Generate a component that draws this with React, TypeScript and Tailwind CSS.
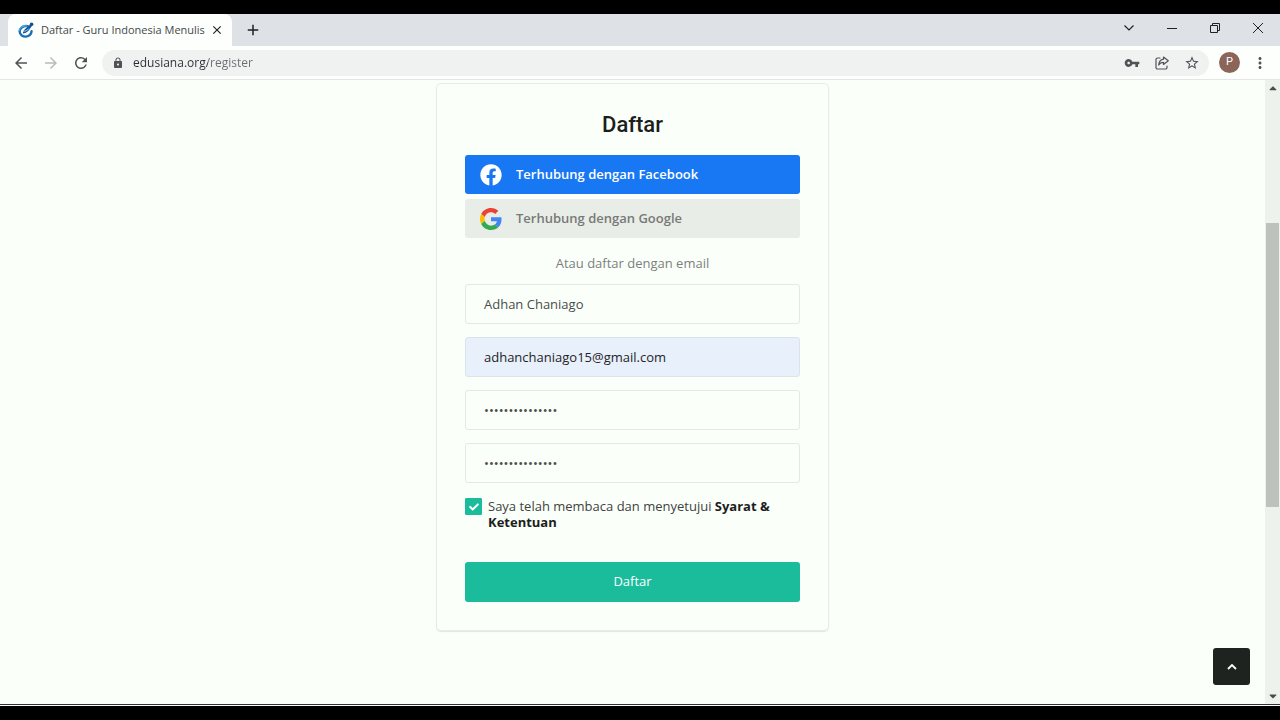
import { useState } from 'react';
import {
  MdArrowBack,
  MdArrowForward,
  MdRefresh,
  MdLock,
  MdVpnKey,
  MdStarBorder,
  MdMoreVert,
  MdClose,
  MdAdd,
} from 'react-icons/md';
import { FaFacebook, FaCheck, FaCaretUp, FaCaretDown } from 'react-icons/fa';

// Logo de la pestaña
function SiteLogo() {
  return (
    <svg viewBox="0 0 16 16" className="size-4 shrink-0" aria-hidden="true">
      <path d="M9.800 4.200C5 3.200 1.600 6.300 1.700 9.800c.2 3.300 3.200 5 6.300 4.800 3.400-.3 5.300-2.500 5.600-5.400" fill="none" stroke="#1c6fb5" strokeWidth="2.400" strokeLinecap="round" />
      <path d="M1.200 8.400C2 5.400 5 3.400 8.600 4" fill="none" stroke="#55b4e0" strokeWidth="1.200" strokeLinecap="round" />
      <path d="M5 11.500c-.2-3 2.500-4.600 4.600-6.800l3.800-3.200 1.400 1.300-3 4.200C10 9.500 8.500 11 5 11.500z" fill="#17569c" />
      <path d="M5 9.200c2.200.2 4.500-.8 5.800-2.600" fill="none" stroke="#8fd0ee" strokeWidth="1" />
      <circle cx="13.600" cy="2.300" r="1.800" fill="#1b4f86" />
    </svg>
  );
}

function ShareIcon() {
  return (
    <svg viewBox="0 0 16 16" className="size-4" fill="none" stroke="currentColor" strokeWidth="1.200" strokeLinejoin="round" aria-hidden="true">
      <path d="M6 3H3.500a1.500 1.500 0 0 0-1.500 1.500v8A1.500 1.500 0 0 0 3.500 14h8a1.500 1.500 0 0 0 1.500-1.500V11" strokeLinecap="round" />
      <path d="M9.500 2 14.300 5.700 9.500 9.400V7.300C7.300 7.300 5.800 8.100 4.700 10c.2-3.200 1.900-5.300 4.800-5.800z" />
    </svg>
  );
}

function GoogleIcon() {
  return (
    <svg viewBox="0 0 48 48" className="size-6 p-px" aria-hidden="true">
      <path fill="#EA4335" d="M24 9.500c3.540 0 6.710 1.220 9.210 3.600l6.850-6.850C35.900 2.380 30.470 0 24 0 14.620 0 6.510 5.380 2.560 13.220l7.980 6.190C12.430 13.720 17.740 9.500 24 9.500z" />
      <path fill="#4285F4" d="M46.980 24.550c0-1.570-.15-3.090-.38-4.550H24v9.020h12.940c-.58 2.960-2.260 5.480-4.780 7.180l7.730 6c4.510-4.180 7.090-10.360 7.090-17.650z" />
      <path fill="#FBBC05" d="M10.530 28.590c-.48-1.450-.76-2.990-.76-4.590s.27-3.140.76-4.590l-7.980-6.190C.92 16.460 0 20.120 0 24c0 3.880.92 7.540 2.560 10.780l7.970-6.190z" />
      <path fill="#34A853" d="M24 48c6.480 0 11.930-2.130 15.890-5.810l-7.730-6c-2.150 1.450-4.920 2.300-8.160 2.300-6.260 0-11.570-4.220-13.470-9.910l-7.980 6.190C6.510 42.620 14.620 48 24 48z" />
    </svg>
  );
}

function TabStrip() {
  return (
    <div className="flex h-8 bg-[#dee1e6] pl-2 text-[#1f2124]">
      <div className="flex w-56 items-center rounded-t-lg bg-[#fcfffc] pl-2.5 pr-2">
        <SiteLogo />
        <span className="ml-[7px] flex-1 whitespace-nowrap text-[11px] text-[#45484b]">Daftar - Guru Indonesia Menulis</span>
        <button aria-label="Tutup tab"><MdClose className="size-3.5" /></button>
      </div>
      <button aria-label="Tab baru" className="ml-3"><MdAdd className="size-[18px]" /></button>
      <div className="ml-auto flex items-center gap-[27px] pb-1 pr-3.5">
        <button aria-label="Cari tab">
          <svg viewBox="0 0 16 16" className="size-4" fill="none" stroke="currentColor" strokeWidth="1.200"><path d="m3.500 5.500 4.500 4.500 4.500-4.500" /></svg>
        </button>
        <button aria-label="Kecilkan">
          <svg viewBox="0 0 16 16" className="size-4" stroke="currentColor"><path d="M3 8.500h10" /></svg>
        </button>
        <button aria-label="Pulihkan">
          <svg viewBox="0 0 16 16" className="size-4" fill="none" stroke="currentColor"><path d="M3.500 5.500h7v7h-7zM5.500 5.500v-2h7v7h-2" /></svg>
        </button>
        <button aria-label="Tutup">
          <svg viewBox="0 0 16 16" className="size-4" stroke="currentColor"><path d="m3 3 10 10M13 3 3 13" /></svg>
        </button>
      </div>
    </div>
  );
}

function Toolbar() {
  return (
    <div className="flex h-[34px] items-center border-b border-[#e3e6e4] bg-[#fcfffc] pl-3 pr-[11px] text-[#505356]">
      <div className="flex gap-3">
        <button aria-label="Kembali"><MdArrowBack className="size-[18px]" /></button>
        <button aria-label="Maju" className="text-[#b9bcbc]"><MdArrowForward className="size-[18px]" /></button>
        <button aria-label="Muat ulang"><MdRefresh className="size-[18px]" /></button>
      </div>
      <div className="ml-3 flex h-[26px] flex-1 items-center rounded-full bg-[#eff2f1] pl-2.5 pr-[9px]">
        <MdLock className="size-3" />
        <input
          aria-label="Alamat"
          defaultValue="edusiana.org/register"
          className="ml-[9px] min-w-0 flex-1 bg-[linear-gradient(90deg,#2b2e31_75px,#6b6e70_75px)] bg-clip-text text-[12px] text-transparent caret-black outline-none"
        />
        <div className="flex gap-3.5">
          <button aria-label="Kata sandi"><MdVpnKey className="size-4" /></button>
          <button aria-label="Bagikan"><ShareIcon /></button>
          <button aria-label="Bookmark"><MdStarBorder className="size-4" /></button>
        </div>
      </div>
      <button aria-label="Profil" className="ml-2.5 size-[21px] rounded-full bg-[#8a6558] font-[Roboto] text-[11px] text-white">P</button>
      <button aria-label="Menu" className="ml-[11px]"><MdMoreVert className="size-[18px]" /></button>
    </div>
  );
}

const inputClass = 'h-10 w-full rounded-[3px] border border-[#e4e9e4] px-[18px] text-[13px] text-[#4a4d4a] outline-none';

function RegisterForm() {
  const [name, setName] = useState('Adhan Chaniago');
  const [email, setEmail] = useState('adhanchaniago15@gmail.com');
  const [password, setPassword] = useState('menulis12345678');
  const [confirmation, setConfirmation] = useState('menulis12345678');
  const [agreed, setAgreed] = useState(true);

  return (
    <form
      onSubmit={(e) => e.preventDefault()}
      className="mx-auto w-full max-w-[393px] rounded-[5px] border border-[#e8ece8] px-7 pb-7 pt-[25px] shadow-[0_1px_1px_#e2e6e2]"
    >
      <h1 className="text-center font-[Roboto] text-[22px]/8 font-medium text-[#1c1e1c]">Daftar</h1>

      {/* Acceso con redes sociales */}
      <div className="mt-3.5 flex flex-col gap-[5px]">
        <button type="button" className="flex h-[39px] items-center gap-[13px] rounded-[3px] bg-[#1877f2] px-3.5 text-[13px] font-semibold text-white">
          <FaFacebook className="size-6 p-px" />
          Terhubung dengan Facebook
        </button>
        <button type="button" className="flex h-[39px] items-center gap-[13px] rounded-[3px] bg-[#e9ede8] px-3.5 text-[13px] font-semibold text-[#777a77]">
          <GoogleIcon />
          Terhubung dengan Google
        </button>
      </div>

      <p className="mb-[11px] mt-[15px] text-center text-[13px]/5 text-[#7c7f7c]">Atau daftar dengan email</p>

      <div className="flex flex-col gap-[13px]">
        <input aria-label="Nama" value={name} onChange={(e) => setName(e.target.value)} className={inputClass} />
        <input
          type="email"
          aria-label="Email"
          value={email}
          onChange={(e) => setEmail(e.target.value)}
          className="h-10 w-full rounded-[3px] border border-[#dce4ea] bg-[#e7f0fb] px-[18px] text-[13px] text-[#1f2426] outline-none"
        />
        <input type="password" aria-label="Kata sandi" value={password} onChange={(e) => setPassword(e.target.value)} className={inputClass} />
        <input type="password" aria-label="Ulangi kata sandi" value={confirmation} onChange={(e) => setConfirmation(e.target.value)} className={inputClass} />
      </div>

      <label className="mt-[15px] flex items-start gap-1.5 text-[13px]/4 text-[#3f423f]">
        <span className="grid shrink-0 place-items-center">
          <input
            type="checkbox"
            checked={agreed}
            onChange={(e) => setAgreed(e.target.checked)}
            className="peer col-start-1 row-start-1 size-[17px] appearance-none rounded-[1px] border border-[#1abc9c] checked:bg-[#1abc9c]"
          />
          <FaCheck className="pointer-events-none invisible col-start-1 row-start-1 size-2.5 text-white peer-checked:visible" />
        </span>
        <span>
          Saya telah membaca dan menyetujui <a href="#syarat" className="font-bold text-[#1c1e1c]">Syarat &amp; Ketentuan</a>
        </span>
      </label>

      <button type="submit" className="mt-8 h-10 w-full rounded-[3px] bg-[#1abc9c] text-[13px] text-white">Daftar</button>
    </form>
  );
}

function ScrollBar() {
  return (
    <div className="flex w-[15px] flex-col items-center bg-[#eef2ed] text-[#4a4d4a]">
      <FaCaretUp className="my-0.5 size-3" />
      <div className="flex w-full flex-1 flex-col px-px">
        <div className="grow-[127]" />
        <div className="grow-[284] bg-[#bdc2bc]" />
        <div className="grow-[181]" />
      </div>
      <FaCaretDown className="my-0.5 size-3" />
    </div>
  );
}

export default function App() {
  return (
    <div className="flex h-screen flex-col bg-black py-3.5 font-['Open_Sans',sans-serif]">
      <TabStrip />
      <Toolbar />
      <div className="relative flex min-h-0 flex-1 border-b border-[#2e312e] bg-[#fbfffa]">
        <main className="flex-1 overflow-hidden pt-[3px]">
          <RegisterForm />
        </main>
        <ScrollBar />
        <button aria-label="Kembali ke atas" className="absolute bottom-[19px] right-[30px] grid size-[37px] place-items-center rounded-[3px] bg-[#1f231f] text-white">
          <svg viewBox="0 0 12 12" className="size-3" fill="none" stroke="currentColor" strokeWidth="1.800"><path d="m2 8 4-4 4 4" /></svg>
        </button>
      </div>
      <div className="h-px bg-[#fbfffa]" />
    </div>
  );
}
